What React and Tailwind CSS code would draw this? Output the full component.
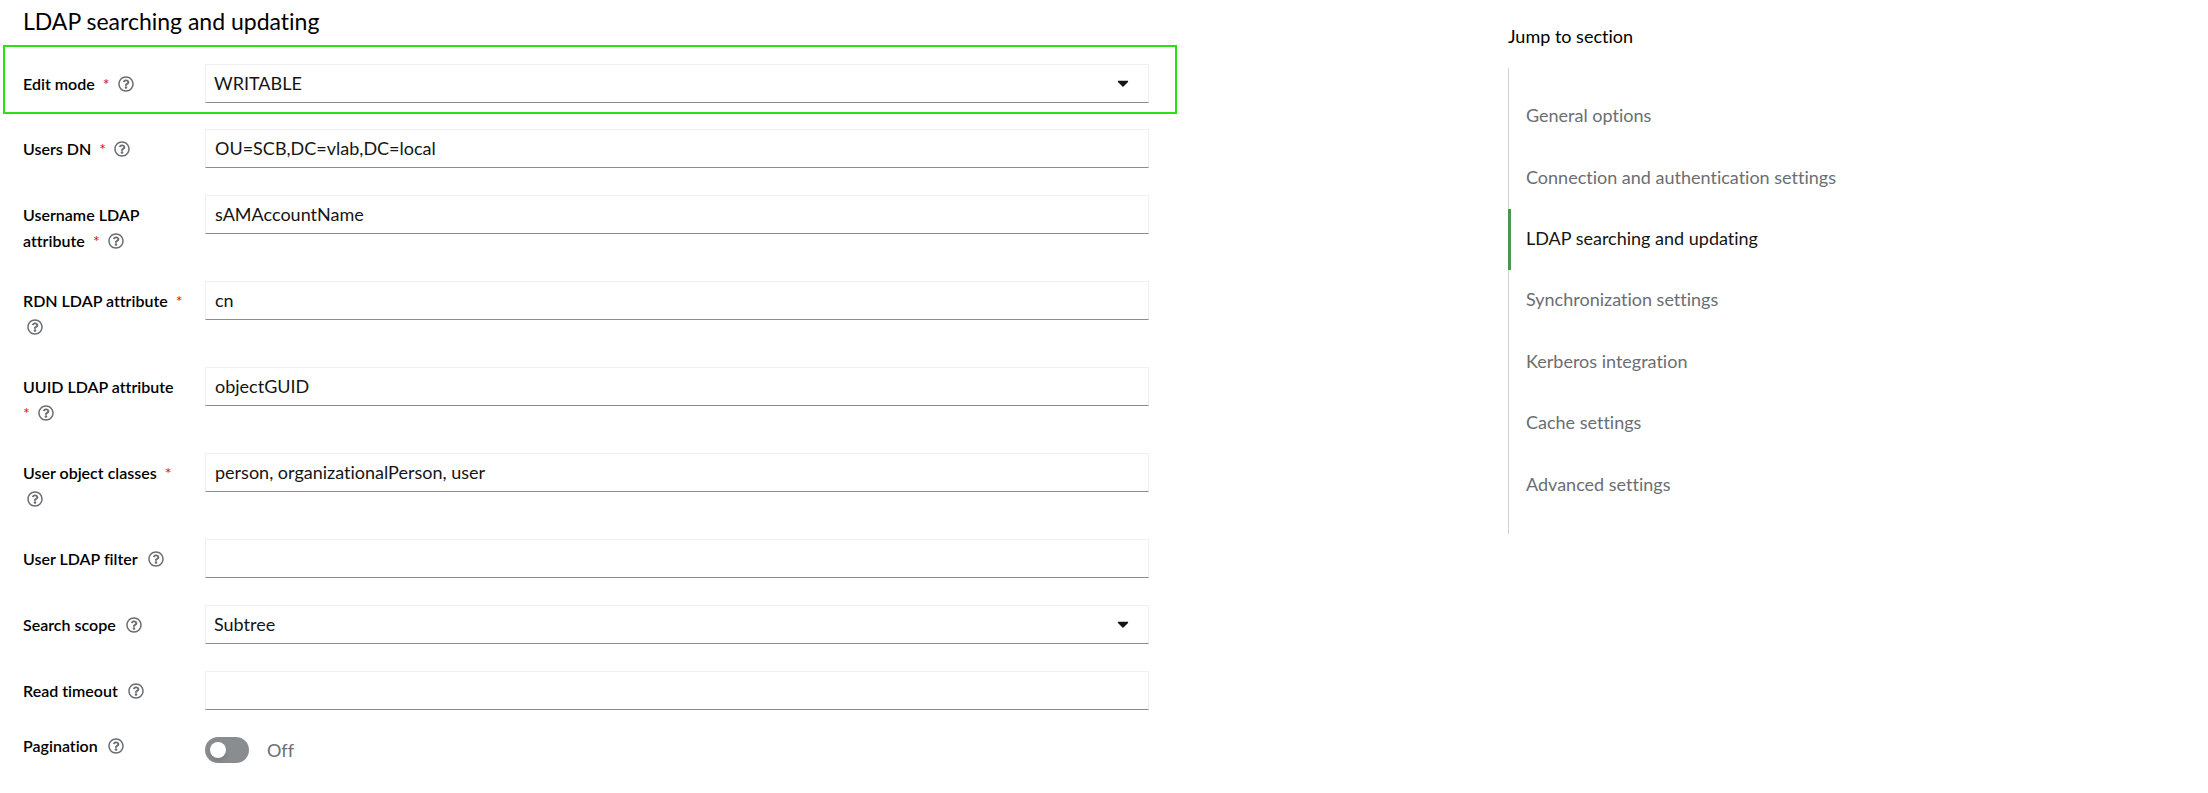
import { useState } from 'react';
import { FaCaretDown, FaRegQuestionCircle } from 'react-icons/fa';

const sections = [
  'General options',
  'Connection and authentication settings',
  'LDAP searching and updating',
  'Synchronization settings',
  'Kerberos integration',
  'Cache settings',
  'Advanced settings',
];

const controlClass =
  'block w-full h-[39px] bg-white border border-[#f0f0f0] border-b-[#8a8d90] rounded-none pb-0.5 text-lg leading-6 text-[#151515] outline-none focus:border-b-[#06c]';

function FieldLabel({ id, label, required, className = 'pt-[7px] pb-px' }) {
  return (
    <div className={`w-40 shrink-0 text-base leading-[26px] ${className}`}>
      <label htmlFor={id} className="font-semibold text-black">
        <span className={required ? 'pr-1' : 'pr-0.5'}>{label}</span>
        {required && <span aria-hidden="true" className="font-normal text-[#c9190b]"> *</span>}
      </label>{' '}
      <button type="button" aria-label={`Help for ${label}`} className="ml-1 h-4 align-[-2px] text-[#6a6e73] hover:text-[#151515]">
        <FaRegQuestionCircle size={16} className="block" />
      </button>
    </div>
  );
}

function FormRow({ children, highlight }) {
  return (
    <div className={`flex gap-[22px] ${highlight ? 'mb-[15px] border-2 border-[#2be010] pt-[17px] pb-[9px] pl-[18px] pr-[26px]' : 'mb-[26px] min-h-10 pl-5 pr-7'}`}>
      {children}
    </div>
  );
}

function TextField({ id, label, required, defaultValue = '' }) {
  return (
    <FormRow>
      <FieldLabel id={id} label={label} required={required} />
      <div className="min-w-0 flex-1">
        <input id={id} type="text" defaultValue={defaultValue} className={`${controlClass} px-[9px]`} />
      </div>
    </FormRow>
  );
}

function SelectField({ id, label, required, options, highlight }) {
  return (
    <FormRow highlight={highlight}>
      <FieldLabel id={id} label={label} required={required} />
      <div className="relative min-w-0 flex-1">
        <select id={id} className={`${controlClass} appearance-none px-2`}>
          {options.map(o => <option key={o}>{o}</option>)}
        </select>
        <FaCaretDown size={18} className="pointer-events-none absolute right-[17px] top-2.5 text-[#151515]" />
      </div>
    </FormRow>
  );
}

function SwitchField({ id, label }) {
  const [on, setOn] = useState(false);

  return (
    <FormRow>
      <FieldLabel id={id} label={label} className="-mt-1" />
      <div className="flex items-start gap-[18px]">
        <input
          id={id}
          type="checkbox"
          role="switch"
          checked={on}
          onChange={e => setOn(e.target.checked)}
          className="h-[26px] w-11 appearance-none rounded-full bg-[#8a8d90] before:ml-[5px] before:mt-[5px] before:block before:size-4 before:rounded-full before:bg-white before:shadow-md checked:bg-[#06c] checked:before:ml-[23px]"
        />
        <span className="text-lg leading-[26px] text-[#6a6e73]">{on ? 'On' : 'Off'}</span>
      </div>
    </FormRow>
  );
}

export default function App() {
  const [active, setActive] = useState('LDAP searching and updating');

  return (
    <div className="flex min-h-screen justify-between bg-white pl-[3px] font-['Lato',sans-serif] text-[#151515] [font-variant-ligatures:none]">
      <main className="min-w-0 max-w-[1174px] flex-1">
        <h1 className="mb-2 pl-5 pt-1.5 text-[23px] leading-[31px] text-black">LDAP searching and updating</h1>
        <form>
          <SelectField id="edit-mode" label="Edit mode" required highlight options={['WRITABLE', 'READ_ONLY', 'UNSYNCED']} />
          <TextField id="users-dn" label="Users DN" required defaultValue="OU=SCB,DC=vlab,DC=local" />
          <TextField id="username-attr" label="Username LDAP attribute" required defaultValue="sAMAccountName" />
          <TextField id="rdn-attr" label="RDN LDAP attribute" required defaultValue="cn" />
          <TextField id="uuid-attr" label="UUID LDAP attribute" required defaultValue="objectGUID" />
          <TextField id="object-classes" label="User object classes" required defaultValue="person, organizationalPerson, user" />
          <TextField id="ldap-filter" label="User LDAP filter" />
          <SelectField id="search-scope" label="Search scope" options={['Subtree', 'One Level']} />
          <TextField id="read-timeout" label="Read timeout" />
          <SwitchField id="pagination" label="Pagination" />
        </form>
      </main>

      <aside className="w-[700px] shrink-0 pt-[23px]">
        <h2 className="text-lg leading-[26px] text-black">Jump to section</h2>
        <nav className="mt-[19px] border-l border-[#d2d2d2] py-[18px]">
          <ul className="grid h-[430px] auto-rows-fr">
            {sections.map(s => (
              <li key={s} className="-ml-px grid">
                <a
                  href="#"
                  onClick={e => { e.preventDefault(); setActive(s); }}
                  className={`flex items-center border-l-3 pb-[3px] pl-[15px] text-lg leading-[26px] ${s === active ? 'border-[#4b9550] text-[#151515]' : 'border-transparent text-[#6a6e73] hover:text-[#151515]'}`}
                >
                  {s}
                </a>
              </li>
            ))}
          </ul>
        </nav>
      </aside>
    </div>
  );
}
